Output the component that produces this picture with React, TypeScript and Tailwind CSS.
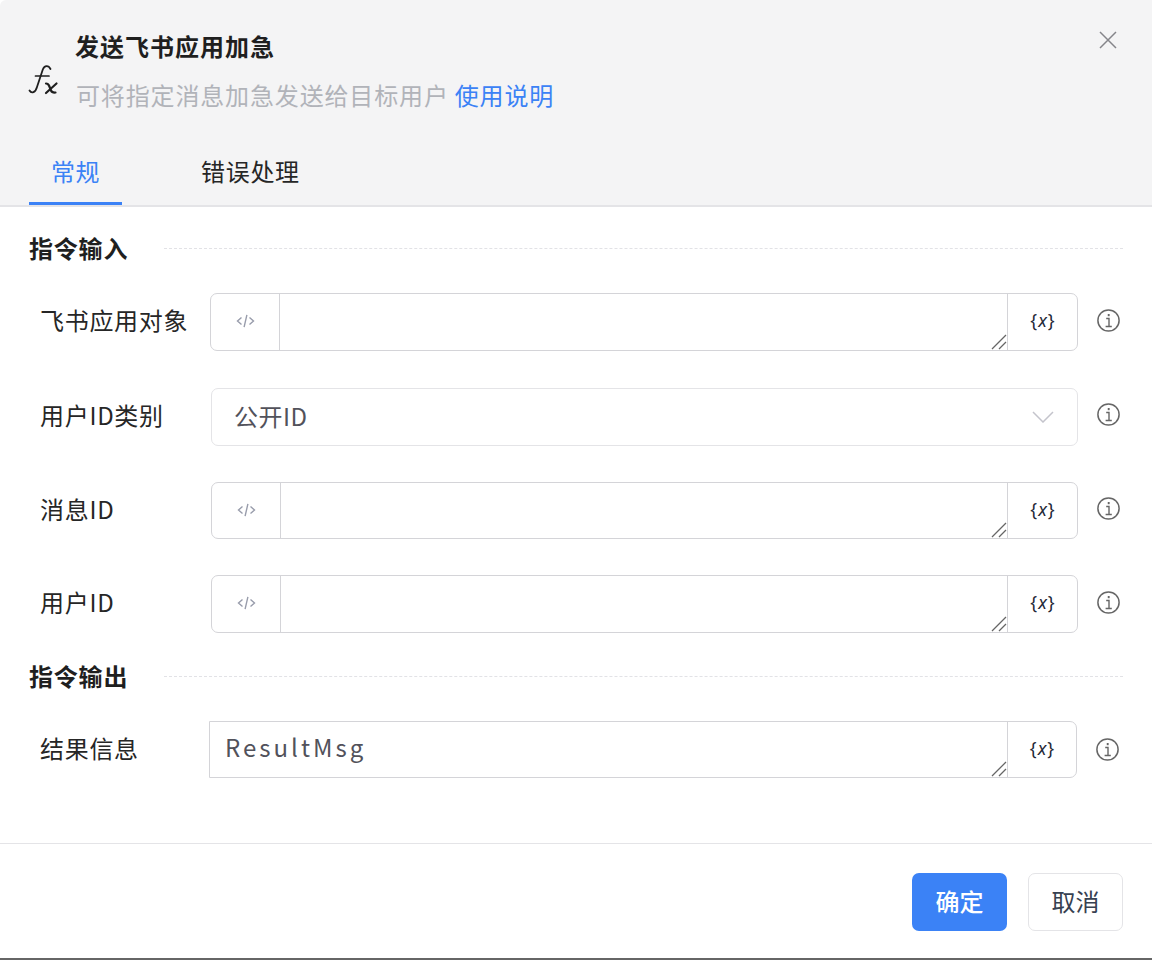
const FONT = "font-['Noto_Sans_CJK_SC','Noto_Sans',sans-serif]"

function FxIcon() {
  return (
    <svg width="34" height="34" viewBox="0 0 34 34" fill="none" stroke="#1f1f1f" strokeLinecap="round" className="-mt-[2px] mr-[15px] -ml-[3px]">
      <path strokeWidth="1.8" d="M24.5 7C22.5 3 18.5 3 16.8 7.5L11 25C9.5 30.5 5.5 32 3.5 28.5" />
      <path strokeWidth="1.7" d="M9.5 14H23" />
      <path strokeWidth="2.2" d="M20 21.5C21.5 21.5 22.5 22.2 23.2 24L25 28.5C25.6 30 26.5 30.8 29.5 30.5" />
      <path strokeWidth="2.2" d="M30.5 21.5 20 31" />
    </svg>
  )
}

function CodeIcon() {
  return (
    <svg width="19" height="14" viewBox="0 0 19 14" fill="none" stroke="#989cab" strokeWidth="1.4">
      <path d="M5.5 3.5 1.5 7 5.5 10.5M13.5 3.5 17.5 7 13.5 10.5M10.9 .8 8.1 13.2" />
    </svg>
  )
}

function CloseIcon() {
  return (
    <svg width="18" height="18" viewBox="0 0 18 18" fill="none" stroke="#85858a" strokeWidth="1.5" className="mt-[31px]">
      <path d="M1 1 17 17M17 1 1 17" />
    </svg>
  )
}

function HelpIcon({ shift = '-mt-[4px]' }: { shift?: string }) {
  return (
    <svg width="23" height="23" viewBox="0 0 23 23" fill="none" stroke="#666" className={`ml-[19px] mr-[3px] shrink-0 ${shift}`}>
      <circle cx="11.5" cy="11.5" r="10.6" strokeWidth="1.5" />
      <path d="M9.2 9.5H12V17.5M8.6 17.5H14.8" strokeWidth="1.4" />
      <path d="M11.7 5V7.2" strokeWidth="1.9" />
    </svg>
  )
}

function ResizeHandle() {
  return (
    <svg width="16" height="16" viewBox="0 0 16 16" stroke="#666" strokeWidth="1.3" className="pointer-events-none absolute right-0 bottom-0">
      <path d="M1 15 15 1M8 15 15 8" />
    </svg>
  )
}

function VarButton({ width = 'w-[70px]' }: { width?: string }) {
  return (
    <button className={`flex h-full ${width} shrink-0 items-center justify-center border-l border-[#d4d4d8] pb-[3px] font-['Noto_Sans',sans-serif] text-[18px] text-[#1f2937]`}>
      <span>{'{'}</span>
      <span className="mx-[1px] italic">x</span>
      <span>{'}'}</span>
    </button>
  )
}

function SectionTitle({ title, className }: { title: string; className?: string }) {
  return (
    <div className={`flex items-center ${className ?? ''}`}>
      <h3 className="h-[32px] w-[135px] shrink-0 text-[24px] leading-[30px] font-bold tracking-[0.8px] text-[#1f1f1f]">{title}</h3>
      <div className="-mt-[1px] flex-1 border-t border-dashed border-[#e2e2e6]" />
    </div>
  )
}

const LABEL = 'h-[32px] shrink-0 pl-[11px] text-[24px] leading-[28px] tracking-[0.7px] text-[#262626]'

function CodeRow({ label, labelClass, mt, height = 'h-[58px]' }: { label: string; labelClass: string; mt: string; height?: string }) {
  return (
    <div className={`flex items-center ${mt}`}>
      <label className={`${labelClass} ${LABEL}`}>{label}</label>
      <div className={`flex ${height} flex-1 overflow-hidden rounded-[7px] border border-[#d4d4d8] bg-white`}>
        <div className="flex w-[69px] shrink-0 items-center justify-center border-r border-[#d4d4d8] pb-[2px]">
          <CodeIcon />
        </div>
        <div className="relative flex-1">
          <textarea className="block h-full w-full resize-none outline-none" />
          <ResizeHandle />
        </div>
        <VarButton />
      </div>
      <HelpIcon />
    </div>
  )
}

export default function App() {
  return (
    <div className={`flex h-[960px] w-[1152px] flex-col overflow-hidden border-b-2 border-[#666] bg-white ${FONT}`}>
      <header className="h-[207px] shrink-0 rounded-tl-[6px] border-b-2 border-[#e4e4e7] bg-[#f4f4f5]">
        <div className="flex h-[142px] pl-[29px] pr-[35px]">
          <div className="flex items-center pt-[18px]">
            <FxIcon />
          </div>
          <div className="flex-1 pt-[28px]">
            <h2 className="text-[24px] leading-[36px] font-semibold tracking-[1px] text-[#1f1f1f]">发送飞书应用加急</h2>
            <p className="mt-[13px] pl-[1px] text-[24px] leading-[36px] tracking-[0.85px] text-[#b1b3b9]">
              可将指定消息加急发送给目标用户
              <a className="ml-[6px] text-[#3b82f6]">使用说明</a>
            </p>
          </div>
          <CloseIcon />
        </div>
        <div className="flex pl-[29px]">
          <div className="h-[63px] w-[93px] border-b-[3px] border-[#3b82f6] pt-[13px] text-center text-[24px] leading-[32px] tracking-[0.5px] text-[#3b82f6]">常规</div>
          <div className="ml-[79px] pt-[13px] text-[24px] leading-[32px] tracking-[0.7px] text-[#262626]">错误处理</div>
        </div>
      </header>

      <main className="flex-1 pl-[29px] pr-[29px]">
        <SectionTitle title="指令输入" className="mt-[26px]" />
        <CodeRow label="飞书应用对象" labelClass="w-[181px]" mt="mt-[28px]" />

        <div className="mt-[37px] flex items-center">
          <label className={`w-[182px] ${LABEL}`}>用户ID类别</label>
          <div className="flex h-[58px] flex-1 items-center justify-between rounded-[7px] border border-[#e4e4e7] bg-white pl-[22px] pr-[23px]">
            <span className="pb-[2px] text-[24px] tracking-[0.5px] text-[#52525b]">公开ID</span>
            <svg width="22" height="12" viewBox="0 0 22 12" fill="none" stroke="#c4c4cc" strokeWidth="1.5">
              <path d="M1 1 11 11 21 1" />
            </svg>
          </div>
          <HelpIcon shift="-mt-[5px]" />
        </div>

        <CodeRow label="消息ID" labelClass="w-[182px]" mt="mt-[36px]" height="h-[57px]" />
        <CodeRow label="用户ID" labelClass="w-[182px]" mt="mt-[36px]" />

        <SectionTitle title="指令输出" className="mt-[28px]" />

        <div className="mt-[28px] flex items-center pr-[1px]">
          <label className={`w-[180px] ${LABEL}`}>结果信息</label>
          <div className="flex h-[57px] flex-1 overflow-hidden rounded-r-[7px] border border-[#d4d4d8] bg-white">
            <div className="relative flex-1">
              <textarea
                defaultValue="ResultMsg"
                className="block h-full w-full resize-none px-[15px] py-[7px] text-[24px] leading-[36px] tracking-[3px] text-[#52525b] outline-none"
              />
              <ResizeHandle />
            </div>
            <VarButton width="w-[69px]" />
          </div>
          <HelpIcon shift="-mt-[1px]" />
        </div>
      </main>

      <footer className="flex h-[115px] shrink-0 items-center justify-end gap-[21px] border-t border-[#e4e4e7] pr-[29px] pt-[1px]">
        <button className="h-[58px] w-[95px] rounded-[7px] bg-[#3b82f6] pb-[2px] text-[24px] font-medium text-white">确定</button>
        <button className="h-[58px] w-[95px] rounded-[7px] border border-[#e4e4e7] bg-white pb-[2px] text-[24px] text-[#374151]">取消</button>
      </footer>
    </div>
  )
}
